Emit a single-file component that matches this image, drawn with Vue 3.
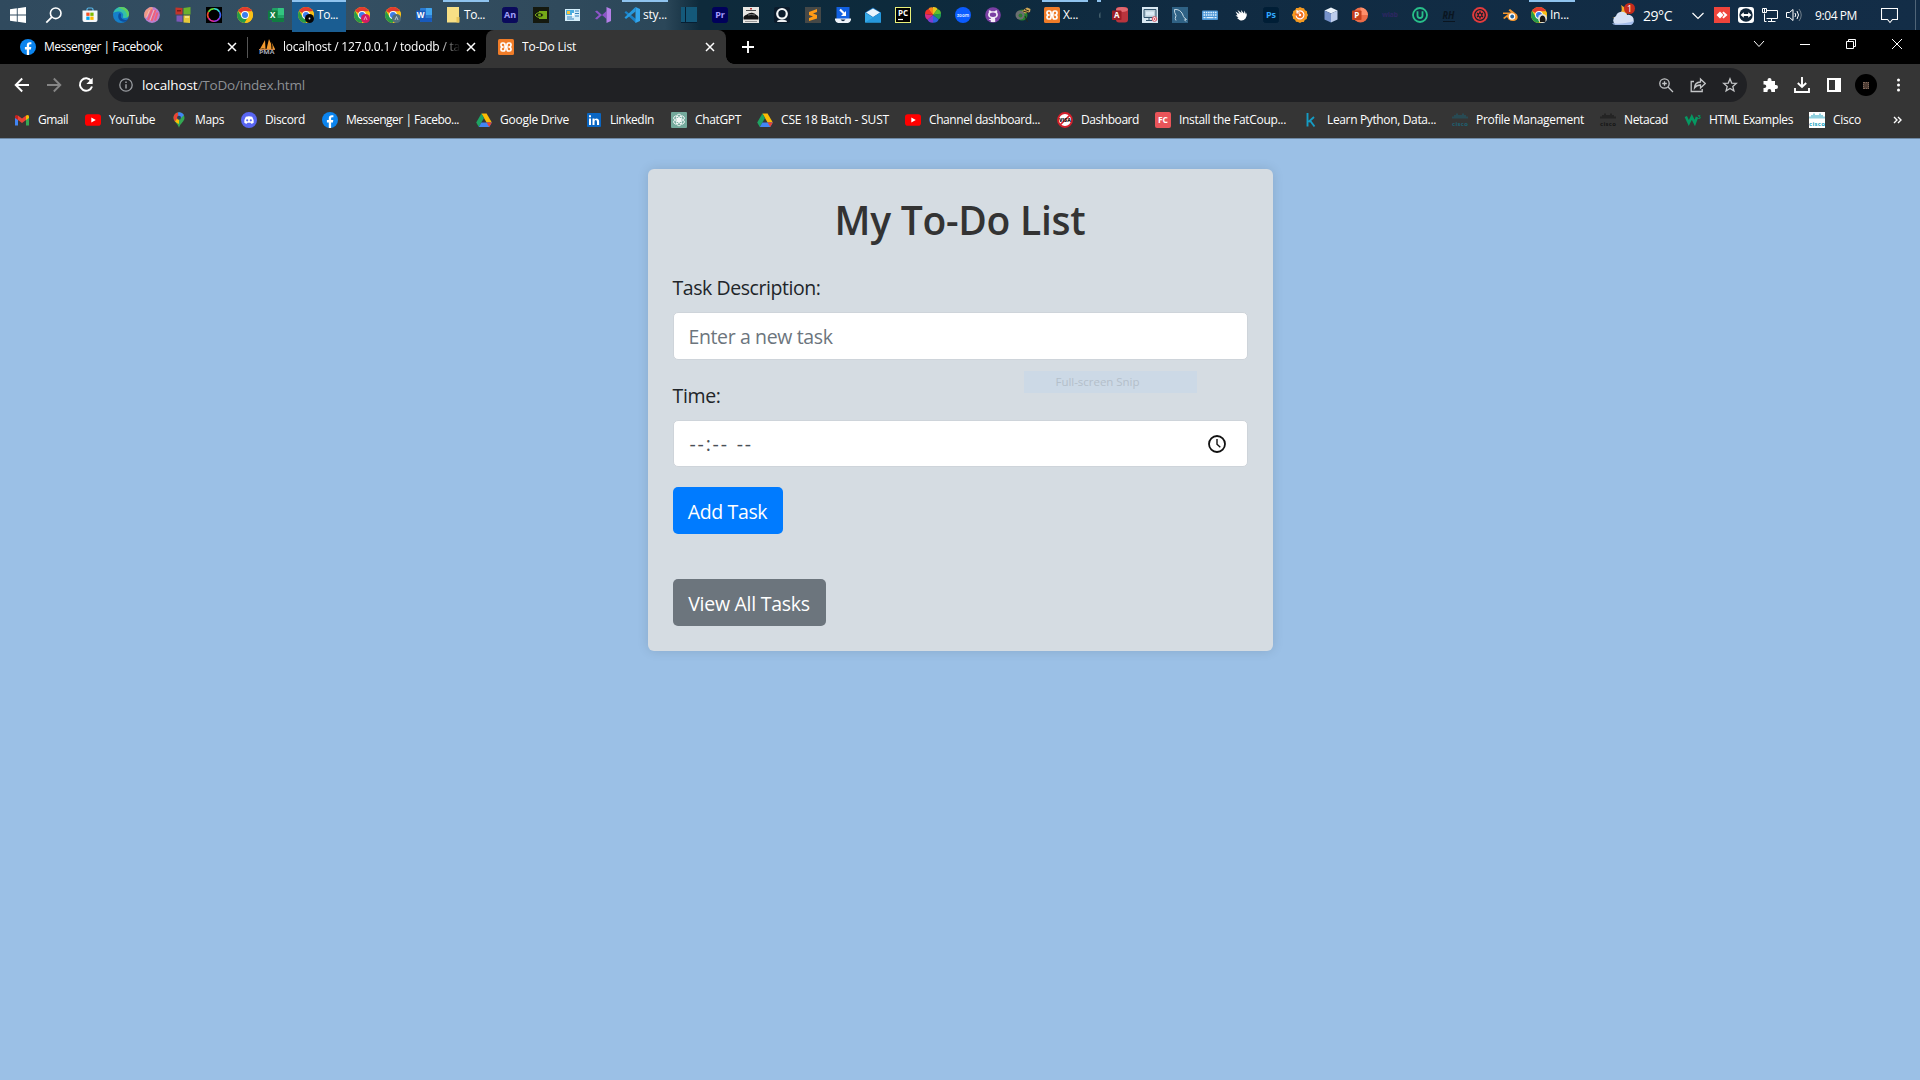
<script setup>
// Adjusts letter spacing so a label occupies the given width in pixels.
const vFit = {
  mounted(el, { value }) {
    const n = el.textContent.length
    el.style.letterSpacing = (value - el.getBoundingClientRect().width) / n + 'px'
  }
}

const chrome = `<circle cx="8" cy="8" r="8" fill="#fbc116"/><path d="M8 8 1.1 4A8 8 0 0 1 14.9 4z" fill="#e33b2e"/><path d="M1.1 4A8 8 0 0 0 7.6 16L11.4 9.5 8 8 4.6 10z" fill="#269b48"/><path d="M8 4.2h7A8 8 0 0 1 7.6 16l4-6z" fill="#fbc116"/><circle cx="8" cy="8" r="3.9" fill="#fff"/><circle cx="8" cy="8" r="3" fill="#3b7ded"/>`
const facebook = `<circle cx="8" cy="8" r="8" fill="#0b84ee"/><path d="M6.8 16V10.400H4.900V8H6.800V6.400C6.800 4.300 8 3.200 9.900 3.200l1.500.1v2h-1c-1 0-1.300.5-1.300 1.200V8h2.200l-.4 2.400H9.100V16z" fill="#fff"/>`
const drive = `<path d="M5.400 1.500h5.200l5.200 9h-5.200z" fill="#fbbc04"/><path d="M5.400 1.500 8 6 2.800 15 .2 10.500z" fill="#1ea362"/><path d="M5.400 10.500h10.400L13.200 15H2.800z" fill="#4285f4"/><path d="M13 10.500h2.800L13.200 15l-2.600-4.500z" fill="#ea4335"/>`
const youtube = `<rect y="2.300" width="16" height="11.400" rx="2.800" fill="#f00"/><path d="M6.300 5.400v5.200L10.800 8z" fill="#fff"/>`
const xampp = `<rect width="16" height="16" rx="1.500" fill="#f07c28"/><path d="M5.300 4H4.500Q3 4 3 5.500v.7Q3 7.500 4.500 8 3 8.500 3 9.800v.7Q3 12 4.500 12h.8Q7 12 7 10.300V9.500Q7 8.500 8 8.500t1 1v.8q0 1.700 1.700 1.700h.8q1.500 0 1.500-1.500v-.7q0-1.300-1.500-1.800 1.500-.5 1.500-1.800v-.7Q13 4 11.500 4h-.8Q9 4 9 5.700v.8q0 1-1 1t-1-1v-.8Q7 4 5.300 4z" fill="none" stroke="#fff" stroke-width="1.700"/>`
const ciscoMark = (c) => `<path d="M1 4.500v2M3 3v3.500M5 1.500v5M7 3v3.500M9 3v3.500M11 1.500v5M13 3v3.500M15 4.500v2" stroke="${c}" stroke-width="1"/><text x="0" y="13.500" font-size="6" font-weight="700" textLength="16" fill="${c}" font-family="Open Sans, sans-serif">cisco</text>`
const tile = (bg, fg, label, border) => `<rect x=".5" y=".5" width="15" height="15" rx="${border ? 0 : 2}" fill="${bg}" stroke="${border || bg}"/><text x="8" y="${border ? 8.800 : 11.300}" text-anchor="middle" font-size="${border ? 8 : 9}" font-weight="700" fill="${fg}" font-family="Open Sans, sans-serif">${label}</text>`
const office = (dark, mid, light, l) => `<rect x="4" y="1" width="12" height="14" rx="1" fill="${mid}"/><path d="M10 1h5a1 1 0 0 1 1 1v6h-6z" fill="${light}"/><path d="M4 11h12v3a1 1 0 0 1-1 1H5a1 1 0 0 1-1-1z" fill="${dark}"/><rect y="3.500" width="9.500" height="9.500" rx=".8" fill="${dark}"/><text x="4.700" y="11.200" text-anchor="middle" font-size="8" font-weight="700" fill="#fff" font-family="Open Sans, sans-serif">${l}</text>`

const icons = {
  windows: `<path d="M0 2.300 6.800 1.300V7.600H0zM7.700 1.200 16 0v7.600H7.700zM0 8.400h6.800v6.300L0 13.700zM7.700 8.400H16V16l-8.300-1.200z" fill="#fff"/>`,
  search: `<circle cx="9.700" cy="6.300" r="5.300" fill="none" stroke="#fff" stroke-width="1.600"/><path d="M5.800 10.200.3 15.700" stroke="#fff" stroke-width="1.700"/>`,
  store: `<path d="M5 4V2.500q0-1.500 1.500-1.500h3Q11 1 11 2.500V4" fill="none" stroke="#58b6e8" stroke-width="1.200"/><path d="M.5 3.500h15V13q0 2-2 2h-11q-2 0-2-2z" fill="#f4f7fa"/><path d="M4.300 5.600h3.300v3.300H4.300z" fill="#f25022"/><path d="M8.300 5.600h3.300v3.300H8.300z" fill="#7fba00"/><path d="M4.300 9.600h3.300v3.300H4.300z" fill="#00a4ef"/><path d="M8.300 9.600h3.300v3.300H8.300z" fill="#ffb900"/>`,
  edge: `<circle cx="8" cy="8" r="8" fill="#167fc9"/><path d="M.3 6.500C1.300 2.500 4.500 0 8.200 0 13 0 16 3.400 16 7c0 2.700-2 4-4 4-1.800 0-2.600-.6-2.100-1.300C11 7.500 9.500 5 6.200 4.600 3.600 4.300 1.500 5 .3 6.500z" fill="#35c1a8"/><path d="M8.200 0C13 0 16 3.400 16 7c0 2-1 3.200-2.400 3.700C15 6 12 2 5 .8A9 9 0 0 1 8.200 0z" fill="#62cf5d"/><path d="M6 6.500c-2 3.500 0 7.500 4 8.300 2 .3 4-.8 4.800-2.300C11.500 14 7 11.500 8 8.500 8.400 7 7 6 6 6.500z" fill="#0d4f9e"/>`,
  pink: `<circle cx="8" cy="8" r="7.900" fill="#b97fd0"/><path d="M8 .1A7.900 7.900 0 0 0 1 11.500L9 2z" fill="#ef9a86"/><path d="M4 13 8 2.500M7.500 14l4-11M11 13.500l2.500-8" stroke="#f0607a" stroke-width="2"/><path d="M2.500 10.500 5.500 3M6 13.500 10 3" stroke="#f8b9b4" stroke-width="1"/>`,
  mosaic: `<path d="M.5.500 7.500 1v6.500h-7z" fill="#c2342a"/><path d="M8.500 1l7-1v7.500h-7z" fill="#6cb12c"/><path d="M1.500 8.500h6V15l-6-.5z" fill="#7d57b8"/><path d="M8.500 8.500h6.500V16l-6.500-.5z" fill="#e6c93a"/><path d="M2 3h4v1.500H2z" fill="#7d1a16"/><path d="M10 9h4v2h-4z" fill="#f5e27c"/>`,
  ring: `<path d="M0 0h16v16H0z" fill="#000"/><g fill="none" stroke-width="1.600"><path d="M8 1.700a6.300 6.300 0 0 1 5.500 3.100" stroke="#34d8d0"/><path d="M13.500 4.800a6.300 6.300 0 0 1 0 6.400" stroke="#3c62f0"/><path d="M13.500 11.200A6.300 6.300 0 0 1 8 14.300" stroke="#9e35e2"/><path d="M8 14.300a6.300 6.300 0 0 1-5.500-3.100" stroke="#e52ea0"/><path d="M2.500 11.200a6.300 6.300 0 0 1 0-6.400" stroke="#e8462a"/><path d="M2.500 4.800A6.300 6.300 0 0 1 8 1.700" stroke="#68dc38"/></g>`,
  chrome,
  chromeBlack: chrome + `<circle cx="11.500" cy="11.500" r="4.500" fill="#050505"/><circle cx="11.500" cy="11.500" r=".9" fill="#ddd"/>`,
  chromePink: chrome + `<circle cx="11.500" cy="11.500" r="4.500" fill="#d51b61"/><path d="M11.500 9.500 10 13M11.500 9.500 13 13" stroke="#f5bcd2" stroke-width=".8"/>`,
  chromeGrey: chrome + `<circle cx="11.500" cy="11.500" r="4.500" fill="#526e7c"/><path d="M11.500 9.500 10 13M11.500 9.500 13 13" stroke="#cfdae0" stroke-width=".8"/>`,
  chromePhoto: chrome + `<circle cx="11.500" cy="11.500" r="4.500" fill="#e4e2dc"/><path d="M9 15q-1-6 2.500-6.500Q15 9 14.500 15z" fill="#181818"/>`,
  excel: office('#107c41', '#21a366', '#33c481', 'X'),
  word: office('#185abd', '#2b7cd3', '#41a5ee', 'W'),
  access: `<rect x="4" y="0" width="12" height="15.500" rx="3" fill="#b8343d"/><ellipse cx="10" cy="2.500" rx="6" ry="2.400" fill="#e16970"/><rect y="3.500" width="9.500" height="9.500" rx=".8" fill="#9c1d26"/><text x="4.700" y="11.200" text-anchor="middle" font-size="8" font-weight="700" fill="#fff" font-family="Open Sans, sans-serif">A</text>`,
  powerpoint: `<circle cx="8.500" cy="8" r="7.500" fill="#ed6c47"/><path d="M8.500.5A7.500 7.500 0 0 1 16 8H8.500z" fill="#ff8f6b"/><rect y="3.500" width="9.500" height="9.500" rx=".8" fill="#c43e1c"/><text x="4.700" y="11.200" text-anchor="middle" font-size="8" font-weight="700" fill="#fff" font-family="Open Sans, sans-serif">P</text>`,
  folder: `<path d="M2 0h12v15.500H2z" fill="#f7df85"/><path d="M11.500 10h3v5.500h-3z" fill="#e9c75d"/>`,
  animate: tile('#0a0a5c', '#a0a0f8', 'An'),
  nvidia: `<path d="M0 0h16v16H0z" fill="#15190f"/><path d="M6 4h8v8H6z" fill="#76a918"/><path d="M2 8q4-5 9 0-5 5-9 0z" fill="#15190f" stroke="#76a918" stroke-width="1"/><circle cx="6.500" cy="8" r="1.500" fill="#76a918"/>`,
  panel: `<path d="M1 2h15v12H1z" fill="#d5eefa"/><path d="M2 3h8v5H2z" fill="#4caedf"/><path d="M3 4h3v3H3z" fill="#f5c33c"/><path d="M11 4h4M11 6.500h4M11 9h4M3 10h5M3 12h7" stroke="#3683bd" stroke-width="1.200"/><path d="M8 6h2v3H8z" fill="#fff"/>`,
  visualstudio: `<path d="m0 4.500 2-1 9.500 8.500L11.500 4 2 12.500l-2-1 4-3.500z" fill="#8d55c8"/><path d="M11.500 0 16 2v12l-4.500 2z" fill="#b57fe8"/>`,
  vscode: `<path d="M.5 5.500 2 4l10 8v4z" fill="#1a82c8"/><path d="M11.500 0v4.500L2 12 .5 10.500z" fill="#2699df"/><path d="M11.500 0 16 2v12l-4.500 2z" fill="#32a5ec"/>`,
  notebook: `<path d="M0 0h16v15H0z" fill="#14597a"/><path d="M4.500 0v15M0 15.500h16" stroke="#071f33" stroke-width="1"/>`,
  premiere: tile('#00005b', '#a59cff', 'Pr'),
  car: `<path d="M0 0h16v16H0z" fill="#e9e7e4"/><path d="M7 1h2v1.500H7z" fill="#b93834"/><path d="M3 3.500h10" stroke="#4c4c4e" stroke-width="1"/><path d="M.5 10Q1.500 8 4 7.500 6 5.500 9 5.700q3 .3 4 2 2 .8 2.500 2.300v2.500h-15z" fill="#121314"/><path d="M5 8q3-1 7 0" stroke="#787a7b" stroke-width="1" fill="none"/><path d="M2 14.500h12" stroke="#999"/>`,
  camera: `<rect width="16" height="16" rx="2" fill="#0b1b2b"/><circle cx="8" cy="6.800" r="4.800" fill="none" stroke="#f5f7f8" stroke-width="2.200"/><path d="M3 15q0-2 2.500-2h5q2.500 0 2.500 2z" fill="#eef1f3"/>`,
  sublime: `<path d="M0 0h16v16H0z" fill="#454847"/><path d="M12 2v3L8 6.500 12 8v3.500L4 14v-3l4-1.500L4 8V5z" fill="#ff9b16"/>`,
  scanner: `<path d="M1.500 0h13v12h-13z" fill="#1261e1"/><path d="m5 2.500 4 4" stroke="#fff" stroke-width="2.200"/><path d="M11 4v5H6z" fill="#fff"/><path d="M0 11.500h16V13q-1 3-3 3H3q-2 0-3-3z" fill="#eef3fa"/><path d="M5.500 12.500Q8 16 10.500 12.500z" fill="#172a44"/>`,
  mail: `<path d="M0 5.500 8 .5l8 5V15H0z" fill="#116bb5"/><path d="M1 5.500 8 1.500l7 4L8 10z" fill="#e9f4fc"/><path d="m0 5.500 8 5 8-5V15.500H0z" fill="#35a9e7"/><path d="m0 15.500 8-5 8-5v10z" fill="#2597dc"/>`,
  pycharm: tile('#000', '#fff', 'PC', '#e9f078') + `<path d="M3 12.500h5" stroke="#fff" stroke-width="1.200"/>`,
  wheel: `<path d="M8 8V0q3-.5 4.700 2z" fill="#e8c41f"/><path d="M8 8V.5Q4.500-.5 3.200 2.200z" fill="#fa8418"/><path d="M8 8 12.500 2Q16 3 16 7z" fill="#5fc02f"/><path d="m8 8 8-1.500q.5 4-2.500 6z" fill="#1f9a55"/><path d="m8 8 5.700 4.500Q12 16 8 15.700z" fill="#2c62dd"/><path d="M8 8v7.700Q4 16 2.500 12.500z" fill="#7a3fd0"/><path d="m8 8-5.500 4.700Q-.2 11 0 7z" fill="#d62c88"/><path d="M8 8 0 7q0-4 3.500-5z" fill="#f03228"/>`,
  zoom: `<circle cx="8" cy="8" r="8" fill="#0b5cff"/><text x="8" y="9.500" text-anchor="middle" font-size="4.500" font-weight="700" fill="#cfe0ff" font-family="Open Sans, sans-serif">zoom</text>`,
  github: `<circle cx="8" cy="8" r="7.800" fill="#7b3fa3"/><path d="M4 3.200q1.200 0 2.500 1.100 1.500-.3 3 0 1.300-1.100 2.500-1.100.5 1 .1 2.100 1.200 1.500.7 3.500-.5 2-2.800 2.300l.2 1v3H5.800v-2q-1.700.3-2.300-1.300 1 .5 2.300 0l.2-.7Q3.700 10.800 3.200 8.800q-.5-2 .7-3.500Q3.500 4.200 4 3.200z" fill="#f4ecf8"/><ellipse cx="8" cy="7.800" rx="3.200" ry="2.200" fill="#7b3fa3"/>`,
  satellite: `<circle cx="7" cy="8" r="5.500" fill="#25812d"/><circle cx="5" cy="8" r="4.500" fill="#6b6f70"/><circle cx="5.500" cy="8.500" r="2" fill="#2d7b33"/><path d="m7 4 5-3.500L15.500 2 15 5l-5 1.500z" fill="#d1a856"/><path d="m8 4 5 1.500M10 2.500l4 1.500M10 9l2.500 6" stroke="#29251b" stroke-width="1"/>`,
  xampp,
  slice: `<path d="M9.500 5q-2.500 2.500-1 6h1z" fill="#45606d"/>`,
  monitor: `<path d="M0 0h16v16H0z" fill="#d9e8f2"/><path d="M2 2.500h12v8H2z" fill="#b9cdd8" stroke="#31536b"/><path d="M4 4.500h8v4H4z" fill="#dcebf5"/><path d="M4 13.500h6M7 11v2" stroke="#31536b"/><circle cx="12.500" cy="12" r="2.300" fill="#fff" stroke="#d74a5a"/><circle cx="12.500" cy="12" r="1" fill="#d74a5a"/>`,
  mysql: `<path d="M0 0h16v16H0z" fill="#2f6285"/><path d="M4 13.500Q2.500 12 4 8.500 2 5 2.500 2.500 8 2 10.500 7q1 3 1.500 3.500 1 .5 2.500 2l-2 .3 1.500 1.700" fill="none" stroke="#c3d8e3" stroke-width="1"/>`,
  keyboard: `<rect y="3.500" width="16" height="9.500" rx="1" fill="#4a95d5"/><path d="M1.500 5.500h13M1.500 8h13" stroke="#e2f1fc" stroke-width="1.300" stroke-dasharray="1.500 .8"/><path d="M1.500 10.700h2M4.500 10.700h7M12.500 10.700h2" stroke="#e2f1fc" stroke-width="1.200"/>`,
  bird: `<path d="M2.500 4.500 6.500 7 4.500 3 8.500 6l-.5-3 3 3.500.5-3 1.500 4 1-2q0 4-1.500 6-2.500 3-6 1.500L4 11l1.500-.5L2.500 8.500l2-.3z" fill="#fff"/>`,
  photoshop: tile('#001e36', '#31a8ff', 'Ps'),
  restore: `<path d="m8 0 2 1 2 .2 1 2 2 1 .1 2L16 8l-1 2-.2 2-2 1-1 2-2 .1L8 16l-2-1-2-.2-1-2-2-1-.1-2L0 8l1-2 .2-2 2-1 1-2 2-.1z" fill="#f69a20"/><circle cx="8" cy="8" r="5" fill="#f26f21"/><path d="M5 5.200A4 4 0 1 1 4 8.500M5 3v3h3" fill="none" stroke="#fff" stroke-width="1.200"/><circle cx="8" cy="8" r="1.200" fill="#fff"/>`,
  cube: `<path d="m8 .5 6.500 3-6.500 3-6.500-3z" fill="#edf4fb"/><path d="M1.500 3.500 8 6.500v9l-6.500-3z" fill="#7692ca"/><path d="M14.500 3.500 8 6.500v9l6.500-3z" fill="#bdcdec"/>`,
  faded: `<text x="0" y="10" textLength="16" font-size="7" font-weight="700" fill="#2d2761" font-family="Open Sans, sans-serif">wlab</text>`,
  uTorrent: `<circle cx="8" cy="8" r="7" fill="none" stroke="#28bf89" stroke-width="1.800"/><path d="M5.500 4.300v4.200q0 2.500 2.500 2.500t2.500-2.500V4.300" fill="none" stroke="#28bf89" stroke-width="1.800"/>`,
  rh: `<text x="1.500" y="11.500" font-size="11" font-style="italic" font-weight="700" fill="#0a1520" font-family="Open Sans, sans-serif" textLength="12" lengthAdjust="spacingAndGlyphs">RH</text><path d="M2 14.500h12" stroke="#0a1520"/>`,
  redGear: `<circle cx="8" cy="8" r="7.900" fill="#e33b3d"/><circle cx="8" cy="8" r="5.300" fill="none" stroke="#16202c" stroke-width="1.300"/><path d="M8 4.500v7M5 6.200l6 3.600M11 6.200 5 9.800" stroke="#16202c" stroke-width="1.600"/><circle cx="8" cy="8" r="1.200" fill="#e33b3d"/>`,
  blender: `<path d="M1 5.500h8L6.500 3.200 8 2l7 5.500q2 4-1.500 6-3.500 1.500-7-1L5 10 2.500 12 1 11l5-4H1z" fill="#f3962e"/><circle cx="10" cy="9.500" r="3.200" fill="#fff"/><circle cx="10.200" cy="9.500" r="1.900" fill="#25669e"/>`,
  anydesk: `<path d="M0 0h16v16H0z" fill="#ef443b"/><path d="m6 4.500 3.500 3.500L6 11.500 2.500 8zM9.500 4.500l4 3.500-4 3.500-1.200-1.200L10.500 8 8.300 5.700z" fill="#fff"/>`,
  teamviewer: `<rect width="16" height="16" rx="3" fill="#fff"/><circle cx="8" cy="8" r="6.700" fill="#0f2438"/><path d="M2.500 8l3.300-2.700v1.700h4.400V5.300L13.500 8l-3.300 2.700V9H5.800v1.700z" fill="#fff"/>`,
  network: `<path d="M4.500 3.500h11v8h-11M9.500 11.500v3M6 14.500h7.500M2.500 6.500v8h2" fill="none" stroke="#fff"/><path d="M.5 1.500h4v4h-4zM2.500 2v3" fill="none" stroke="#fff"/>`,
  speaker: `<path d="M.5 5.500h3L7 2.500v11l-3.500-3h-3z" fill="none" stroke="#fff"/><path d="M9 6q1.500 2 0 4M11 4q3 4 0 8" fill="none" stroke="#fff"/><path d="M13 2q4.500 6 0 12" fill="none" stroke="#71808c"/>`,
  facebook, drive, youtube,
  phpmyadmin: `<path d="M6 1 1 10q3-1 5.500 0zM10 0 7.500 10h5Q13 5 10 0zM12.500 3q1.500 4 1 7H16z" fill="#f39a2d"/><path d="M0 10.500h16" stroke="#c8834b"/><text x="0" y="15" font-size="5.500" font-weight="700" textLength="15.500" lengthAdjust="spacingAndGlyphs" fill="#a9adba" font-family="Open Sans, sans-serif">PMA</text>`,
  gmail: `<path d="M1 4v9.500h3V7z" fill="#4285f4"/><path d="M15 4v9.500h-3V7z" fill="#34a853"/><path d="M4 3.400 8 6.500l4-3.100V8l-4 3-4-3z" fill="#ea4335"/><path d="M12 3.400Q15 2 15 4.500V6l-3 2z" fill="#fbbc04"/><path d="M4 3.400Q1 2 1 4.500V6l3 2z" fill="#c5221f"/>`,
  maps: `<path d="M8 .3a5.500 5.500 0 0 0-5.500 5.500c0 4 4.300 5.500 5.500 10 1.200-4.500 5.500-6 5.500-10A5.500 5.500 0 0 0 8 .3z" fill="#34a853"/><path d="M2.500 5.500A5.500 5.500 0 0 1 7 .4L8 6l-4 3.500q-1.500-2-1.500-4z" fill="#ea4335"/><path d="M7 .4q4-.8 6 2.700L8 8z" fill="#4285f4"/><path d="m4 9.500 4-5.500v8q-2-1-4-2.500z" fill="#fbbc04"/><circle cx="8" cy="5.700" r="2" fill="#2b3f55"/>`,
  discord: `<circle cx="8" cy="8" r="8" fill="#5865f2"/><path d="M4.800 4.700q3.200-1 6.400 0Q13 7.500 12.700 10.800q-1.300 1-2.500 1l-.6-1H6.400l-.6 1q-1.200 0-2.500-1Q3 7.500 4.800 4.700z" fill="#fff"/><circle cx="6.200" cy="8.300" r="1.100" fill="#5865f2"/><circle cx="9.800" cy="8.300" r="1.100" fill="#5865f2"/>`,
  linkedin: `<rect x="1" y="1" width="14" height="14" rx="1" fill="#0a66c2"/><path d="M3 6.500h2V13H3zM3 3.300h2v2H3zM6.500 6.500h2v1q2-2 4 0 .6.600.6 2V13H11v-3q0-2-1.300-2T8.500 10v3h-2z" fill="#fff"/>`,
  chatgpt: `<rect width="16" height="16" rx="1" fill="#74aa9c"/><g fill="none" stroke="#fff" stroke-width=".8"><ellipse cx="8" cy="5.600" rx="2.400" ry="3.500"/><ellipse cx="8" cy="5.600" rx="2.400" ry="3.500" transform="rotate(60 8 8)"/><ellipse cx="8" cy="5.600" rx="2.400" ry="3.500" transform="rotate(120 8 8)"/><ellipse cx="8" cy="5.600" rx="2.400" ry="3.500" transform="rotate(180 8 8)"/><ellipse cx="8" cy="5.600" rx="2.400" ry="3.500" transform="rotate(240 8 8)"/><ellipse cx="8" cy="5.600" rx="2.400" ry="3.500" transform="rotate(300 8 8)"/></g>`,
  dashboard: `<circle cx="8" cy="8" r="7" fill="#fff" stroke="#d51f2b" stroke-width="1.900"/><path d="M3 13 13 3" stroke="#d51f2b" stroke-width="1.700"/><text x="8" y="10" text-anchor="middle" font-size="5" font-weight="800" fill="#1b1b1b" font-family="Open Sans, sans-serif" textLength="12" lengthAdjust="spacingAndGlyphs">VISA</text>`,
  fatcoupon: `<rect width="16" height="16" rx="2" fill="#ea5459"/><text x="8" y="11.200" text-anchor="middle" font-size="8.500" font-weight="700" fill="#fff" font-family="Open Sans, sans-serif">FC</text>`,
  kaggle: `<path d="M4.500 1v13.500M11 5l-5.500 5M7 8.500l4.500 6" stroke="#159cc4" stroke-width="1.900" fill="none"/>`,
  ciscoBlue: ciscoMark('#1d6173'),
  ciscoDark: ciscoMark('#151515'),
  w3: `<path d="M.8 4.500l3 6.500 3-6 3 6 2.200-6" fill="none" stroke="#059862" stroke-width="2.600"/><text x="12.500" y="6.500" font-size="6" font-weight="700" fill="#059862" font-family="Open Sans, sans-serif">3</text>`,
  ciscoWhite: `<path d="M0 0h16v16H0z" fill="#fff"/>` + ciscoMark('#20a3bf')
}

const between = (list, end) => list.map((it, i) => ({ ...it, span: (i + 1 < list.length ? list[i + 1].x : end) - it.x }))

const taskbar = between([
  ['windows', 10], ['search', 46], ['store', 81.5], ['edge', 113], ['pink', 144], ['mosaic', 175], ['ring', 206], ['chrome', 237], ['excel', 268],
  ['chromeBlack', 298, 'To...', 21, 'active'], ['chromePink', 354], ['chromeGrey', 385], ['word', 416], ['folder', 445, 'To...', 21, 'open'],
  ['animate', 502], ['nvidia', 533], ['panel', 564], ['visualstudio', 595], ['vscode', 624, 'sty...', 24, 'open'], ['notebook', 681], ['premiere', 712],
  ['car', 743], ['camera', 774], ['sublime', 805], ['scanner', 835], ['mail', 865], ['pycharm', 895], ['wheel', 925], ['zoom', 955], ['github', 985],
  ['satellite', 1015], ['xampp', 1044, 'X...', 15, 'open'], ['slice', 1091, '', 0, 'sliver'], ['access', 1112], ['monitor', 1142], ['mysql', 1172], ['keyboard', 1202],
  ['bird', 1233], ['photoshop', 1263], ['restore', 1292], ['cube', 1323], ['powerpoint', 1352], ['faded', 1382], ['uTorrent', 1412], ['rh', 1441],
  ['redGear', 1472], ['blender', 1502], ['chromePhoto', 1531, 'In...', 19, 'open']
].map(([icon, x, label, w, state]) => ({ icon, x, label, w, state })), 1610)

const bookmarks = between([
  ['gmail', 14, 'Gmail', 30], ['youtube', 85, 'YouTube', 46], ['maps', 171, 'Maps', 29], ['discord', 241, 'Discord', 40],
  ['facebook', 322, 'Messenger | Facebo...', 113], ['drive', 476, 'Google Drive', 69], ['linkedin', 586, 'LinkedIn', 44],
  ['chatgpt', 671, 'ChatGPT', 46], ['drive', 757, 'CSE 18 Batch - SUST', 108], ['youtube', 905, 'Channel dashboard...', 111],
  ['dashboard', 1057, 'Dashboard', 58], ['fatcoupon', 1155, 'Install the FatCoup...', 107], ['kaggle', 1303, 'Learn Python, Data...', 109],
  ['ciscoBlue', 1452, 'Profile Management', 108], ['ciscoDark', 1600, 'Netacad', 44], ['w3', 1685, 'HTML Examples', 84], ['ciscoWhite', 1809, 'Cisco', 28]
].map(([icon, x, label, w]) => ({ icon, x, label, w })), 1893)
</script>

<template>
  <div class="screen">
    <div class="taskbar">
      <div v-for="t in taskbar" :key="t.x" class="task" :class="t.state" :style="{ width: t.span + 'px' }">
        <svg class="ico" viewBox="0 0 16 16" v-html="icons[t.icon]"></svg>
        <span v-if="t.label" v-fit="t.w">{{ t.label }}</span>
      </div>
      <div class="tray">
        <svg class="weather" width="26" height="26" viewBox="0 0 26 26">
          <path d="M2 15q5 1 8-3 3-4 1-9 6 3 6 10l-8 5z" fill="#f2a62b" />
          <path d="M6 23a5 5 0 0 1 0-9 6 6 0 0 1 11-1 5 5 0 0 1 3 10z" fill="#d5e1f6" />
          <path d="M2 21q8 2 22-2-1 4-4 4H6q-3 0-4-2z" fill="#a4bdea" />
          <circle cx="19.500" cy="6.500" r="5.500" fill="#c42b1c" />
          <text x="19.500" y="10" text-anchor="middle" font-size="9" fill="#fff">1</text>
        </svg>
        <span class="temp" v-fit="29">29°C</span>
        <svg class="chev" width="12" height="8" viewBox="0 0 12 8"><path d="m.5 1 5.500 5.500L11.500 1" fill="none" stroke="#fff" stroke-width="1.200" /></svg>
        <svg v-for="n in ['anydesk', 'teamviewer', 'network', 'speaker']" :key="n" class="ico" viewBox="0 0 16 16" v-html="icons[n]"></svg>
        <span class="time" v-fit="42">9:04 PM</span>
        <svg class="note" width="17" height="17" viewBox="0 0 17 17"><path d="M.5 1.500h16v11h-5L9 15.500l-2.500-3h-6z" fill="none" stroke="#fff" stroke-width="1.100" /></svg>
      </div>
    </div>

    <div class="tabs">
      <div class="tab first">
        <svg class="ico" viewBox="0 0 16 16" v-html="icons.facebook"></svg>
        <span class="name"><span v-fit="118">Messenger | Facebook</span></span>
        <svg class="x" viewBox="0 0 10 10"><path d="m1 1 8 8M9 1 1 9" /></svg>
      </div>
      <div class="tab second">
        <svg class="ico" viewBox="0 0 16 16" v-html="icons.phpmyadmin"></svg>
        <span class="name fade"><span v-fit="177">localhost / 127.0.0.1 / tododb / ta</span></span>
        <svg class="x" viewBox="0 0 10 10"><path d="m1 1 8 8M9 1 1 9" /></svg>
      </div>
      <div class="tab current">
        <svg class="ico" viewBox="0 0 16 16" v-html="icons.xampp"></svg>
        <span class="name"><span v-fit="54">To-Do List</span></span>
        <svg class="x" viewBox="0 0 10 10"><path d="m1 1 8 8M9 1 1 9" /></svg>
      </div>
      <svg class="plus" width="12" height="12" viewBox="0 0 12 12"><path d="M6 0v12M0 6h12" stroke="#fff" stroke-width="1.900" /></svg>
      <div class="controls">
        <svg viewBox="0 0 12 12"><path d="m1 3 5 5.500L11 3" /></svg>
        <svg viewBox="0 0 12 12"><path d="M1 6.500h10" /></svg>
        <svg viewBox="0 0 12 12"><path d="M1.500 3.500h7v7h-7zM3.500 3.500v-2h7v7h-2" /></svg>
        <svg viewBox="0 0 12 12"><path d="m1 1 10 10M11 1 1 11" /></svg>
      </div>
    </div>

    <div class="toolbar">
      <svg class="nav" viewBox="0 0 16 16"><path d="M15 8H2M8.200 1.500 1.700 8l6.500 6.500" fill="none" stroke="#fff" stroke-width="1.900" /></svg>
      <svg class="nav" viewBox="0 0 16 16"><path d="M1 8h13M7.800 1.500 14.300 8l-6.500 6.500" fill="none" stroke="#858585" stroke-width="1.900" /></svg>
      <svg class="nav" viewBox="0 0 16 16"><path d="M13.200 4A6.200 6.200 0 1 0 14 9.500" fill="none" stroke="#fff" stroke-width="2" /><path d="M14.700.8v6.300H8.400z" fill="#fff" /></svg>
      <div class="omnibox">
        <svg class="info" width="14" height="14" viewBox="0 0 14 14"><circle cx="7" cy="7" r="6.200" fill="none" stroke="#9a9da1" stroke-width="1.300" /><path d="M7 6.200V10.500M7 3.500v1.500" stroke="#9a9da1" stroke-width="1.500" /></svg>
        <span class="host" v-fit="55.5">localhost</span><span class="path" v-fit="107.5">/ToDo/index.html</span>
        <div class="actions">
          <svg viewBox="0 0 16 16"><circle cx="6.500" cy="6.500" r="4.700" /><path d="m10 10 5 5M4.200 6.500h4.600M6.500 4.200v4.600" /></svg>
          <svg viewBox="0 0 16 16"><path d="M4 4.500H1.200v10h11V12" /><path d="M4.500 11q.2-5.700 6-6V2l4.700 4.500-4.700 4.500V8Q6.500 8 4.500 11z" /></svg>
          <svg viewBox="0 0 16 16"><path d="m8 1.800 1.700 4.300 4.600.3-3.500 3 1.100 4.500L8 11.500l-3.900 2.400 1.100-4.500-3.500-3 4.600-.3z" /></svg>
        </div>
      </div>
      <div class="extras">
        <svg viewBox="0 0 16 16"><path d="M1.500 4h4V3a2 2 0 0 1 4 0v1h3.500v4h1a2 2 0 0 1 0 4h-1v3H9.300v-1a1.900 1.900 0 0 0-3.800 0v1h-4v-4h1a1.800 1.800 0 0 0 0-3.600h-1z" fill="#fff" /></svg>
        <svg viewBox="0 0 16 16"><path d="M8 0v9.500M3.800 6 8 10l4.200-4M1 11v4h14v-4" fill="none" stroke="#fff" stroke-width="1.900" /></svg>
        <svg viewBox="0 0 16 16"><path d="M1 1h14v14H1zM3 3v10h6V3z" fill="#fff" fill-rule="evenodd" /></svg>
        <div class="avatar"><i></i></div>
        <svg viewBox="0 0 16 16"><circle cx="8.500" cy="3" r="1.500" fill="#fff" /><circle cx="8.500" cy="8" r="1.500" fill="#fff" /><circle cx="8.500" cy="13" r="1.500" fill="#fff" /></svg>
      </div>
    </div>

    <div class="bookmarks">
      <div v-for="b in bookmarks" :key="b.x" class="mark" :style="{ width: b.span + 'px' }">
        <svg class="ico" viewBox="0 0 16 16" v-html="icons[b.icon]"></svg>
        <span v-fit="b.w">{{ b.label }}</span>
      </div>
      <svg class="more" width="9" height="8" viewBox="0 0 9 8"><path d="m1 1 3 3-3 3M5 1l3 3-3 3" fill="none" stroke="#fff" stroke-width="1.400" /></svg>
    </div>

    <main class="page">
      <section class="card">
        <h1><span v-fit="251">My To-Do List</span></h1>
        <label><span v-fit="148">Task Description:</span></label>
        <div class="field"><span class="placeholder" v-fit="144">Enter a new task</span></div>
        <label><span v-fit="48">Time:</span></label>
        <div class="field time-field">
          <span class="clock-text">--:--<b></b>--</span>
          <svg width="20" height="20" viewBox="0 0 20 20"><circle cx="10" cy="10" r="8" fill="none" stroke="#111" stroke-width="1.800" /><path d="M10 5v5.200l3.300 3" fill="none" stroke="#111" stroke-width="1.400" /></svg>
        </div>
        <button class="add"><span v-fit="79.5">Add Task</span></button>
        <button class="view"><span v-fit="121.500">View All Tasks</span></button>
        <div class="snip"><span v-fit="84">Full-screen Snip</span></div>
      </section>
    </main>
  </div>
</template>

<style>
body { margin: 0; overflow: hidden; }
</style>

<style scoped>
.screen {
  width: 1920px; height: 1080px; display: flex; flex-direction: column; overflow: hidden;
  font-family: "Open Sans", "Noto Sans", sans-serif; font-size: 12px; color: #fff; background: #9bc0e6;
}
.screen * { box-sizing: border-box; }
span { white-space: nowrap; }
svg { display: block; flex: none; }
.ico { width: 16px; height: 16px; overflow: visible; }

.taskbar {
  height: 30px; flex: none; display: flex; padding-left: 10px;
  background: linear-gradient(90deg, #304a5e 0, #344f62 340px, #304a5c 560px, #2b4759 665px, #0e2a3b 700px, #0d2a3c 900px, #102b42 1200px, #132d47 1920px);
}
.task { position: relative; height: 30px; flex: none; display: flex; align-items: center; gap: 3px; }
.task span { position: relative; line-height: 28px; }
.task .ico { position: relative; }
.open::before { content: ""; position: absolute; left: -2px; top: 0; width: 46px; height: 2px; background: #8fc3ee; }
.sliver::before { content: ""; position: absolute; left: 6px; top: 0; width: 4px; height: 2px; background: #8fc3ee; }
.active::before { content: ""; position: absolute; left: -6px; top: 0; width: 54px; height: 30px; background: #1a5d92; border-top: 2px solid #8fc3ee; }
.tray { display: flex; align-items: center; width: 306px; height: 30px; border-right: 1px solid #506578; }
.temp { font-size: 14px; margin-left: 7px; }
.chev { margin: 1px 10px 0 20px; }
.tray .ico { margin-right: 8px; }
.time { margin: 0 24px 0 5px; }

.tabs { height: 34px; flex: none; display: flex; background: #000; }
.tab { height: 34px; display: flex; align-items: center; padding: 0 11px 0 12px; flex: none; }
.first { width: 248px; padding-left: 20px; position: relative; }
.first::after { content: ""; position: absolute; right: 0; top: 7px; width: 1px; height: 21px; background: #555; }
.second { width: 238px; padding-left: 11px; padding-right: 10px; }
.current { width: 240px; background: #353535; border-radius: 8px 8px 0 0; position: relative; }
.current::before, .current::after { content: ""; position: absolute; bottom: 0; width: 8px; height: 8px; }
.current::before { left: -8px; background: radial-gradient(circle at 0 0, #000 7.500px, #353535 8px); }
.current::after { right: -8px; background: radial-gradient(circle at 100% 0, #000 7.500px, #353535 8px); }
.name { flex: 1; margin-left: 8px; overflow: hidden; line-height: 20px; }
.fade { -webkit-mask-image: linear-gradient(90deg, #000 155px, transparent 178px); mask-image: linear-gradient(90deg, #000 155px, transparent 178px); }
.x { width: 10px; height: 10px; }
.x path { stroke: #fff; stroke-width: 1.5; }
.plus { margin: 11px 0 0 16px; }
.controls { margin-left: auto; display: flex; gap: 34px; padding: 8px 17px 0 0; }
.controls svg { width: 12px; height: 12px; }
.controls path { fill: none; stroke: #fff; stroke-width: 1; }

.toolbar { height: 38px; flex: none; display: flex; align-items: center; background: #353535; padding: 4px 0 0 14px; }
.nav { width: 16px; height: 16px; margin-right: 16px; }
.omnibox { width: 1639px; height: 34px; margin-left: -2px; border-radius: 17px; background: #202124; display: flex; align-items: center; padding: 0 9px 0 11px; font-size: 13.5px; line-height: 30px; }
.info { margin-right: 9px; }
.path { color: #8d9094; }
.actions { margin-left: auto; display: flex; gap: 16px; }
.actions svg { width: 16px; height: 16px; }
.actions path, .actions circle { fill: none; stroke: #c4c6c8; stroke-width: 1.300; }
.extras { display: flex; align-items: center; gap: 16px; margin-left: 15px; }
.extras svg { width: 16px; height: 16px; }
.avatar { width: 22px; height: 22px; margin: 0 -3px; border-radius: 50%; background: #000; display: flex; align-items: center; justify-content: center; }
.avatar i { width: 6px; height: 7px; background: #4e3d34; border: 1px dotted #80695b; }

.bookmarks { height: 36px; flex: none; display: flex; align-items: center; background: #353535; padding-left: 14px; }
.mark { display: flex; align-items: center; gap: 8px; flex: none; line-height: 16px; }

.page { flex: 1; display: flex; justify-content: center; align-items: flex-start; border-top: 1px solid #6d88a4; padding-top: 30px; }
.card { position: relative; width: 625px; height: 482px; padding: 25px; border-radius: 6px; background: #d5dce2; box-shadow: 0 0 12px rgba(0, 0, 0, .12); color: #212529; font-size: 19.500px; display: flex; flex-direction: column; align-items: flex-start; }
h1 { align-self: stretch; margin: 0; padding-top: 2px; height: 78px; text-align: center; font-size: 39px; font-weight: 600; line-height: 48px; color: #333; }
label { line-height: 32px; height: 30px; margin-bottom: 10px; }
.field { width: 575px; height: 48px; margin-bottom: 20px; padding: 0 15px; border: 1px solid #ced4da; border-radius: 5px; background: #fff; display: flex; align-items: center; }
.placeholder { color: #6c757d; }
.time-field { height: 47px; justify-content: space-between; padding: 0 20px 0 16px; color: #495057; }
.clock-text { letter-spacing: 1.8px; }
.clock-text b { display: inline-block; width: 8px; }
button { height: 47px; border: 0; border-radius: 5px; color: #fff; font: inherit; padding: 2px 0 0; text-align: center; }
.add { width: 110px; background: #007bff; margin-bottom: 45px; }
.view { width: 153px; background: #6c757d; }
.snip { position: absolute; left: 376px; top: 202px; width: 173px; height: 22px; padding-left: 32px; background: #ccd9e6; color: #b4bfca; font-size: 11.500px; line-height: 21px; }
</style>
